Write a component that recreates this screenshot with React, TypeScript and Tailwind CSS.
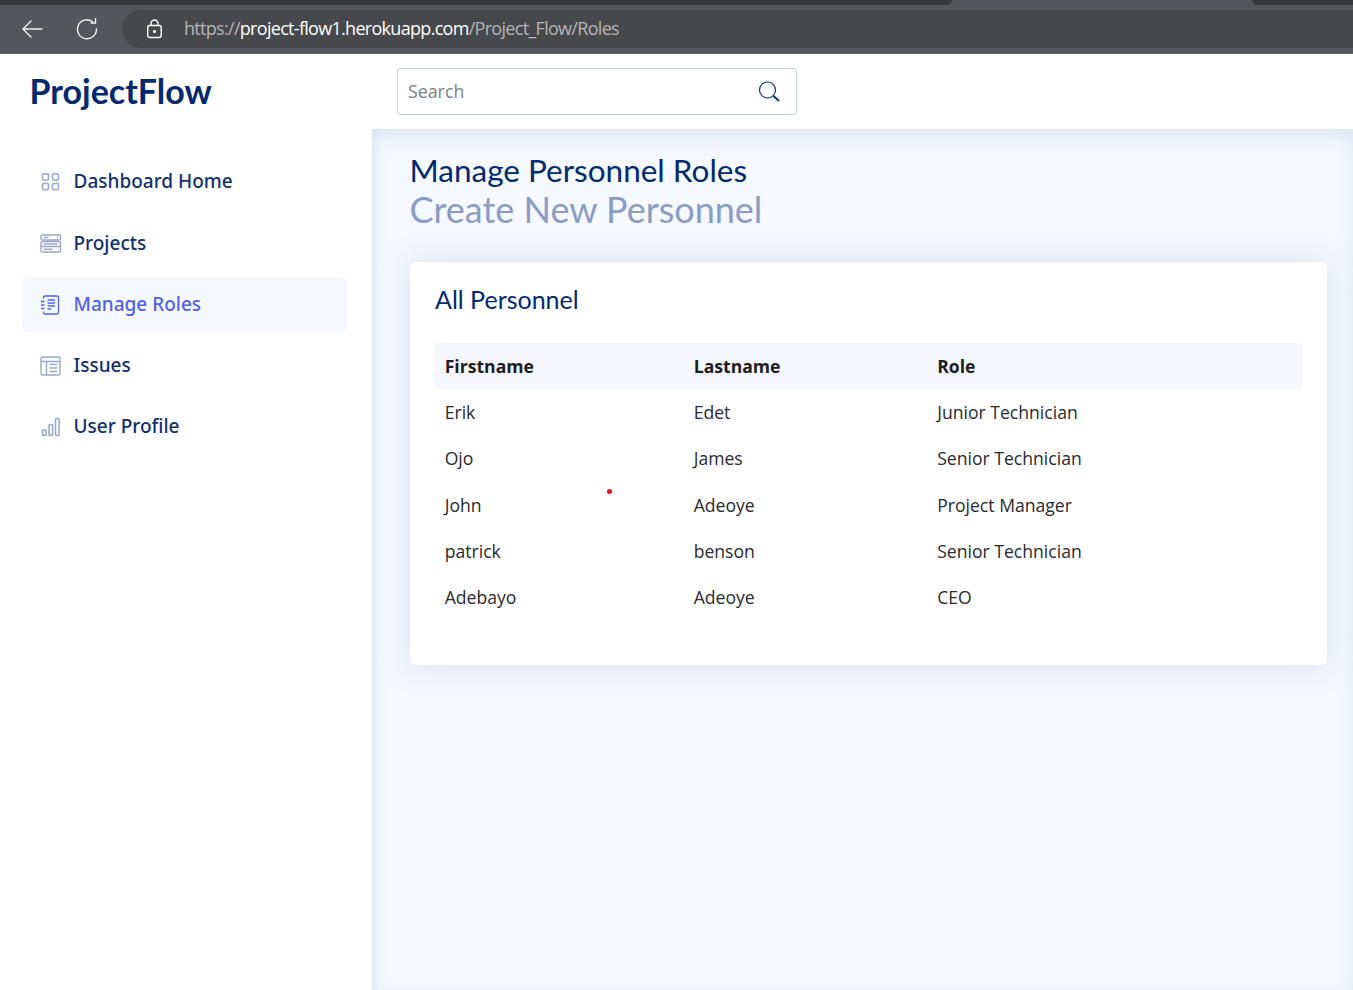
import React from "react";

const head = { fontFamily: 'Lato, sans-serif' };
const navFont = { fontFamily: '"Noto Sans", sans-serif' };

function IconGrid() {
  return (
    <svg width="20" height="20" viewBox="0 0 20 20" fill="none" stroke="#a3afcd" strokeWidth="1.7">
      <rect x="2.500" y="1.800" width="6" height="6.400" rx="1.400" />
      <rect x="12.500" y="1.800" width="6" height="6.400" rx="1.400" />
      <rect x="2.500" y="11.300" width="6" height="6.400" rx="1.400" />
      <rect x="12.500" y="11.300" width="6" height="6.400" rx="1.400" />
    </svg>
  );
}
function IconProjects() {
  return (
    <svg width="22" height="20" viewBox="0 0 22 20" fill="none" stroke="#9aa7c8" strokeWidth="1.400">
      <rect x="1" y="1" width="19.500" height="5" rx="1.500" />
      <rect x="1" y="7.500" width="19.500" height="10.500" rx="1.500" />
      <path d="M3.500 3.500h5M17 3.500h1M1 12.500h19.500M3.500 10h14M3.500 15.300h9" />
    </svg>
  );
}
function IconRoles() {
  return (
    <svg width="20" height="20" viewBox="0 0 20 20" fill="none" stroke="#4f63f0" strokeWidth="1.300">
      <path d="M3.500 3.500V2.500a1.500 1.500 0 0 1 1.500-1.500h12a1.500 1.500 0 0 1 1.500 1.500v15a1.500 1.500 0 0 1-1.500 1.500H5a1.500 1.500 0 0 1-1.500-1.500V16.500" />
      <path d="M7.500 5h7.500M7.500 8h7.500M7.500 11h7.500M7.500 14h4M1 6.500h3.500M1 10h3.500M1 13.500h3.500" />
    </svg>
  );
}
function IconIssues() {
  return (
    <svg width="21" height="20" viewBox="0 0 21 20" fill="none" stroke="#9aa7c8" strokeWidth="1.400">
      <rect x="1" y="1" width="19" height="18" rx="1.500" />
      <path d="M1 5.500h19M6.500 5.500V19M9.500 8.500h7.500M9.500 12h7.500M9.500 15.500h7.500" />
    </svg>
  );
}
function IconBars() {
  return (
    <svg width="20" height="20" viewBox="0 0 20 20" fill="none" stroke="#97a5c7" strokeWidth="1.500">
      <rect x="2.500" y="13" width="3.600" height="5.500" rx="1.200" />
      <rect x="9" y="7.500" width="3.600" height="11" rx="1.200" />
      <rect x="15.500" y="1.500" width="3.600" height="17" rx="1.200" />
    </svg>
  );
}

const nav = [
  { label: "Dashboard Home", icon: <IconGrid />, cls: "mt-0 text-[#12306f]" },
  { label: "Projects", icon: <IconProjects />, cls: "mt-[7px] text-[#12306f]" },
  { label: "Manage Roles", icon: <IconRoles />, cls: "mt-[6px] bg-[#f5f8ff] text-[#4f5ff0]" },
  { label: "Issues", icon: <IconIssues />, cls: "mt-[6px] text-[#12306f]" },
  { label: "User Profile", icon: <IconBars />, cls: "mt-[6px] text-[#12306f]" },
];

const rows = [
  ["Erik", "Edet", "Junior Technician"],
  ["Ojo", "James", "Senior Technician"],
  ["John", "Adeoye", "Project Manager"],
  ["patrick", "benson", "Senior Technician"],
  ["Adebayo", "Adeoye", "CEO"],
];

export default function App() {
  return (
    <div className="relative flex h-[990px] w-[1353px] flex-col overflow-hidden bg-white" style={{ fontFamily: '"Open Sans", sans-serif' }}>
      {/* Browser chrome */}
      <div className="flex h-[54px] flex-col border-b border-[#66676b] bg-[#55565b]">
        <div className="flex h-[5px] justify-between">
          <div className="h-[5px] w-[952px] rounded-br-[5px] bg-[#37383c]" />
          <div className="h-[5px] w-[101px] rounded-bl-[5px] bg-[#37383c]" />
        </div>
        <div className="flex flex-1 items-center">
          <div className="flex w-[122px] items-center pl-[21px]">
            <svg width="22" height="20" viewBox="0 0 22 20" fill="none" stroke="#f1f1f2" strokeWidth="1.400" strokeLinecap="round">
              <path d="M21 10H2M10 2l-8 8 8 8" />
            </svg>
            <svg className="ml-[33px]" width="22" height="22" viewBox="0 0 22 22" fill="none" stroke="#f1f1f2" strokeWidth="1.400" strokeLinecap="round">
              <path d="M16.500 3.500A9.500 9.500 0 1 0 20.500 11" />
              <path d="M19.500 0.500v4.500h-4.500" />
            </svg>
          </div>
          <div className="flex h-[38px] flex-1 items-center rounded-l-[19px] bg-[#47484c] pl-[24px]">
            <svg width="17" height="20" viewBox="0 0 17 20" fill="none" stroke="#ffffff" strokeWidth="1.400">
              <rect x="1.700" y="6.500" width="13.500" height="12" rx="2" />
              <path d="M5 6.500V4.500a3.500 3.500 0 0 1 7 0v2" />
              <circle cx="8.500" cy="12.500" r="0.900" fill="#ffffff" />
            </svg>
            <div className="mb-[2px] ml-[21px] text-[18px] leading-none tracking-[-0.7px] text-[#b4b5b8]">
              https://<span className="text-white">project-flow1.herokuapp.com</span>/Project_Flow/Roles
            </div>
          </div>
        </div>
      </div>

      {/* Header */}
      <header className="relative z-10 flex h-[75px] items-center bg-white pl-[29.500px]">
        <div className="mb-[2px] w-[367.500px] text-[34px] font-bold leading-none text-[#032a6e]" style={head}>
          ProjectFlow
        </div>
        <div className="flex h-[47px] w-[400px] items-center justify-between rounded-[3px] border border-[#c5d0e3] pl-[10px] pr-[16px]">
          <span className="text-[17.800px] text-[#7d8086]">Search</span>
          <svg width="22" height="22" viewBox="0 0 22 22" fill="none" stroke="#0b3278" strokeWidth="1.200">
            <circle cx="9.500" cy="9" r="8" />
            <path d="M15.500 15 21 20" strokeWidth="2" />
          </svg>
        </div>
      </header>

      <div className="flex flex-1">
        {/* Sidebar */}
        <aside className="relative z-[5] w-[372px] bg-white pl-[22px] pr-[25px] pt-[25px] shadow-[0_0_8px_rgba(180,195,225,0.25)]">
          {nav.map((n) => (
            <div
              key={n.label}
              className={`flex h-[55px] items-center rounded-[6px] pl-[18px] text-[19px] font-medium ${n.cls}`}
              style={navFont}
            >
              <span className="flex w-[33.500px] items-center">{n.icon}</span>
              <span>{n.label}</span>
            </div>
          ))}
        </aside>

        {/* Main */}
        <main className="flex-1 bg-[#f5f8ff] pl-[37.500px] pr-[26px] pt-[22px] shadow-[inset_0_8px_16px_rgba(170,185,215,0.3)]">
          <h1 className="mt-[-1px] text-[31.500px] font-normal leading-[40px] text-[#032a6e]" style={head}>
            Manage Personnel Roles
          </h1>
          <h2 className="text-[36px] font-normal leading-[39px] text-[#8a9cc3]" style={head}>
            Create New Personnel
          </h2>
          <section className="ml-[0.500px] mt-[33px] h-[403px] rounded-[6px] bg-white px-[25px] pt-[21px] shadow-[0_0_30px_rgba(130,150,200,0.25)]">
            <h3 className="text-[25px] font-normal leading-[32px] text-[#032a6e]" style={head}>
              All Personnel
            </h3>
            <table className="mt-[28px] w-[867px] table-fixed border-collapse text-[17.600px] text-[#2a2a2f]">
              <thead>
                <tr className="h-[46px] bg-[#f6f7fd] text-left text-[#1c1d22]">
                  <th className="w-[258.700px] pl-[9.700px] font-bold">Firstname</th>
                  <th className="w-[243.500px] font-bold">Lastname</th>
                  <th className="font-bold">Role</th>
                </tr>
              </thead>
              <tbody>
                {rows.map((r) => (
                  <tr key={r[0]} className="h-[46.300px]">
                    <td className="pl-[9.700px]">{r[0]}</td>
                    <td>{r[1]}</td>
                    <td>{r[2]}</td>
                  </tr>
                ))}
              </tbody>
            </table>
          </section>
        </main>
      </div>

      <div className="absolute left-[607px] top-[489px] h-[5px] w-[5px] rounded-full bg-[#e0102a]" />
    </div>
  );
}
